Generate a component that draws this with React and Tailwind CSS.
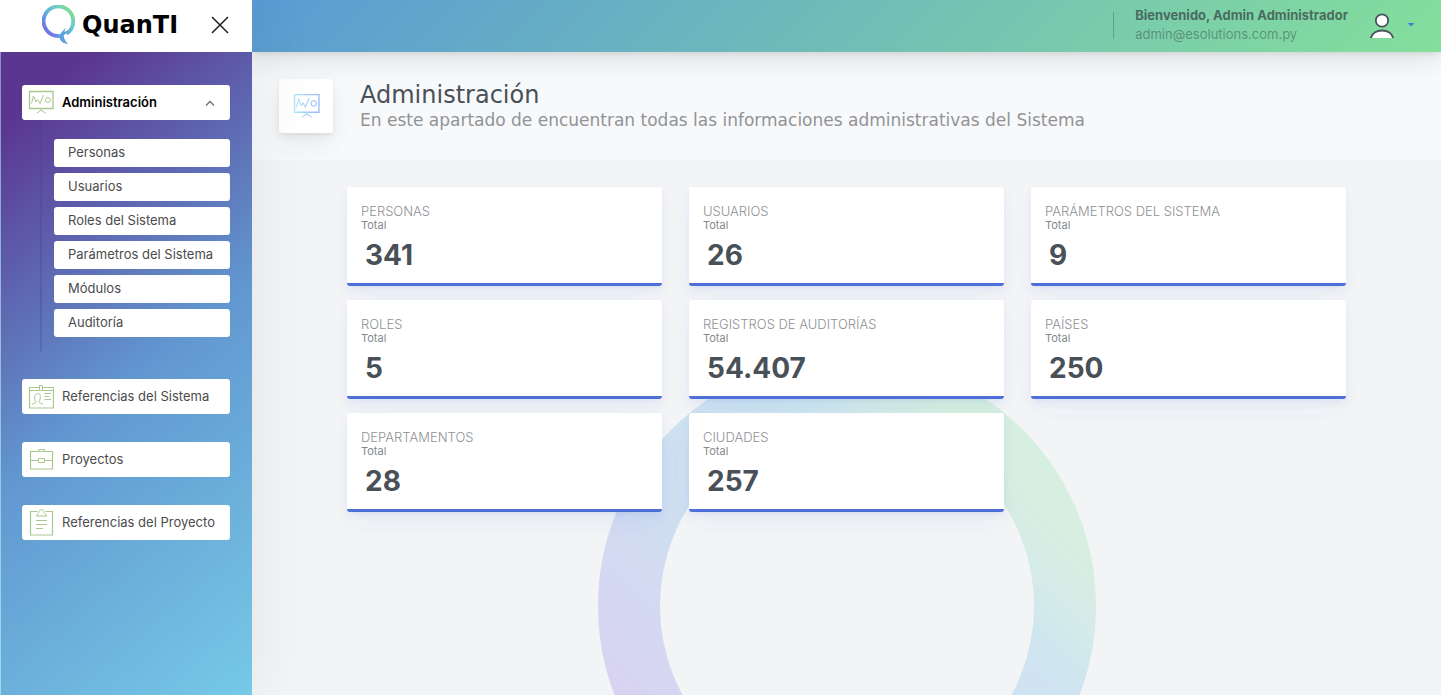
import React from "react";

const subItems = ["Personas", "Usuarios", "Roles del Sistema", "Parámetros del Sistema", "Módulos", "Auditoría"];

const cards = [
  ["PERSONAS", "341"],
  ["USUARIOS", "26"],
  ["PARÁMETROS DEL SISTEMA", "9"],
  ["ROLES", "5"],
  ["REGISTROS DE AUDITORÍAS", "54.407"],
  ["PAÍSES", "250"],
  ["DEPARTAMENTOS", "28"],
  ["CIUDADES", "257"],
];

function BoardIcon({ className, stroke = "#a9c78f" }) {
  return (
    <svg viewBox="0 0 26 26" className={className} fill="none" stroke={stroke} strokeWidth="1" aria-hidden="true">
      <defs>
        <linearGradient id="board" gradientUnits="userSpaceOnUse" x1="0" y1="0" x2="26" y2="0">
          <stop offset="0" stopColor="#b0e8fb" />
          <stop offset="1" stopColor="#98b8f8" />
        </linearGradient>
      </defs>
      <path strokeWidth="1.3" d="M1.5 1.5H25V18.5H1.5Z" />
      <path d="M3.5 13.5L5.5 6L8 12L9.6 9.5L12 13.5L15.5 5" />
      <circle cx="20" cy="10" r="2.5" />
      <path d="M13.2 18.5V20.5M13.2 20.2L8.7 23.2M13.2 20.2L17.7 23.2" />
    </svg>
  );
}

function BadgeIcon() {
  return (
    <svg viewBox="0 0 26 26" className="size-[26px]" fill="none" stroke="#a9c78f" strokeWidth="1" aria-hidden="true">
      <path strokeWidth="1.2" d="M11 3.5H1.5V24H25.5V3.5H15" />
      <path d="M1.5 6.5H11M15 6.5H25.5M11.5 1.5H14.5V6.5H11.5Z" />
      <path d="M4 20.5C5 19 8 19.5 8 17.5C6.5 16 6.5 14 7 11.5C7.5 9 12 9 12.2 11.5C12.5 14 12.2 16 11 17.5C11 19.5 14 19 15 20.5" />
      <path d="M16.5 9.5H23M16.5 12.5H21M16.5 15.5H23" />
    </svg>
  );
}

function BriefcaseIcon() {
  return (
    <svg viewBox="0 0 26 26" className="size-[26px]" fill="none" stroke="#a9c78f" strokeWidth="1" aria-hidden="true">
      <path strokeWidth="1.2" d="M2.5 4.5H24.5V22H2.5Z" />
      <path d="M10.5 4.5V2.5H16.5V4.5M2.5 13.5H10.5M16.5 13.5H24.5M10.5 11.5H16.5V15.5H10.5Z" />
    </svg>
  );
}

function ClipboardIcon() {
  return (
    <svg viewBox="0 0 26 30" className="h-[30px] w-[26px]" fill="none" stroke="#a9c78f" strokeWidth="1" aria-hidden="true">
      <path strokeWidth="1.2" d="M9.5 3.5H2.5V27H24.5V3.5H17.5" />
      <path d="M8.5 8H18.5C18 5.5 16 5.5 15.7 3.5C15.8 0.8 11.2 0.8 11.3 3.5C11 5.5 9 5.5 8.5 8Z" />
      <path d="M8 12.5H19M8 16.5H19M8 20.5H15" />
    </svg>
  );
}

function Logo() {
  return (
    <a href="#" className="flex items-center gap-[6px]">
      <svg viewBox="0 0 34 40" className="h-10 w-[34px]" fill="none" aria-hidden="true">
        <defs>
          <linearGradient id="logo" gradientUnits="userSpaceOnUse" x1="4" y1="29" x2="29" y2="5">
            <stop offset="0" stopColor="#7a68e0" />
            <stop offset="0.4" stopColor="#5fa8e2" />
            <stop offset="0.7" stopColor="#6cc8cf" />
            <stop offset="1" stopColor="#80e08f" />
          </linearGradient>
        </defs>
        <path stroke="url(#logo)" strokeWidth="3.8" d="M16.5 31A14.8 14.8 0 1 1 24.5 28.6" />
        <path fill="#5b9fdc" d="M15.5 29.5L18 29.3L23.6 22.8L22.4 27L27 25.5L21.6 30.6C22.2 34 23.6 37 26.2 39.2C21 38.6 18.2 36 17.6 32.8L15.5 32.8Z" />
      </svg>
      <span className="font-['DejaVu_Sans',sans-serif] text-2xl leading-7 font-bold text-black">QuanTI</span>
    </a>
  );
}

function MenuLink({ icon, children }) {
  return (
    <a href="#" className="flex h-[35px] items-center gap-[8px] rounded-[3px] bg-white pl-[6px] text-[13px] text-[#4b4b4b]">
      {icon}
      {children}
    </a>
  );
}

function Sidebar() {
  return (
    <aside className="z-10 flex w-[252px] shrink-0 flex-col shadow-[7px_0_60px_rgba(0,0,0,0.06)]">
      <div className="flex h-[52px] items-center justify-between bg-white pr-[22px] pb-[2px] pl-[42px]">
        <Logo />
        <button type="button" aria-label="Cerrar menú">
          <svg viewBox="0 0 20 20" className="size-5" fill="none" stroke="#222" strokeWidth="1.6" aria-hidden="true">
            <path d="M2 2L18 18M18 2L2 18" />
          </svg>
        </button>
      </div>
      <nav className="flex flex-1 flex-col gap-7 border-l border-white/30 bg-[linear-gradient(140deg,#5b3691_9%,#6197d0_51%,#76c9e7_100%)] py-[33px] pr-[22px] pl-[21px]">
        <div>
          <button
            type="button"
            aria-expanded="true"
            className="flex h-[35px] w-full items-center gap-[8px] rounded-[3px] bg-white pr-[14px] pl-[6px] text-[13px] font-semibold text-black"
          >
            <BoardIcon className="size-[26px]" />
            Administración
            <svg viewBox="0 0 12 12" className="ml-auto size-3" fill="none" stroke="#777" strokeWidth="1.5" aria-hidden="true">
              <path d="M2 8.5L6 4.5L10 8.5" />
            </svg>
          </button>
          <ul className="ml-[18px] flex flex-col gap-[6px] border-l-2 border-[#3c4696]/30 pt-[19px] pb-[14px] pl-3">
            {subItems.map((item) => (
              <li key={item}>
                <a href="#" className="flex h-7 items-center rounded-[3px] bg-white pl-[14px] text-[13px] text-[#4b4b4b]">
                  {item}
                </a>
              </li>
            ))}
          </ul>
        </div>
        <MenuLink icon={<BadgeIcon />}>Referencias del Sistema</MenuLink>
        <MenuLink icon={<BriefcaseIcon />}>Proyectos</MenuLink>
        <MenuLink icon={<ClipboardIcon />}>Referencias del Proyecto</MenuLink>
      </nav>
    </aside>
  );
}

function Header() {
  return (
    <header className="z-5 flex h-[52px] items-center justify-end bg-[linear-gradient(135deg,#5b9bd4,#84df9b)] pr-[26px] pb-[2px] shadow-[0_7px_35px_rgba(4,9,20,0.04),0_15px_22px_rgba(4,9,20,0.04),0_4px_8px_rgba(4,9,20,0.05),0_2px_3px_rgba(4,9,20,0.03)]">
      <div className="h-[27px] border-l border-[#343a40]/30" />
      <div className="pl-[21px] text-[13px] leading-[19px]">
        <div className="font-bold text-[#343a40]/70">Bienvenido, Admin Administrador</div>
        <div className="text-[#343a40]/45">admin@esolutions.com.py</div>
      </div>
      <button type="button" aria-label="Cuenta" className="ml-[21px] flex items-center gap-[12px]">
        <svg viewBox="0 0 26 28" className="h-7 w-[26px]" fill="#fff" stroke="#4a525a" strokeWidth="1.8" aria-hidden="true">
          <circle cx="13" cy="9.5" r="6.2" />
          <path stroke="none" d="M2 27C4 17 22 17 24 27Z" />
          <path fill="none" d="M1.8 27C4.5 17 21.5 17 24.2 27" />
        </svg>
        <svg viewBox="0 0 8 4" className="h-1 w-2" fill="#4a78d8" aria-hidden="true">
          <path d="M0.5 0H7.5L4 3.5Z" />
        </svg>
      </button>
    </header>
  );
}

function Watermark() {
  return (
    <svg viewBox="0 0 498 590" className="absolute top-[305px] left-1/2 h-[590px] w-[498px] -translate-x-1/2" fill="none" aria-hidden="true">
      <defs>
        <linearGradient id="ring" gradientUnits="userSpaceOnUse" x1="73" y1="425" x2="425" y2="73">
          <stop offset="0" stopColor="#dad0f2" />
          <stop offset="0.1" stopColor="#d7d5f2" />
          <stop offset="0.25" stopColor="#d3daf2" />
          <stop offset="0.4" stopColor="#cedff0" />
          <stop offset="0.72" stopColor="#cfe5f0" />
          <stop offset="0.81" stopColor="#d4ebe9" />
          <stop offset="0.92" stopColor="#d7efe0" />
        </linearGradient>
      </defs>
      <circle cx="249" cy="249" r="218" stroke="url(#ring)" strokeWidth="62" />
    </svg>
  );
}

function StatCard({ title, value }) {
  return (
    <article className="h-[99px] rounded-[3px] border-b-[3px] border-[#4f6fd8] bg-white px-[14px] pt-4 shadow-[0_7px_35px_rgba(63,106,216,0.02),0_15px_22px_rgba(63,106,216,0.02),0_4px_8px_rgba(63,106,216,0.05),0_2px_3px_rgba(63,106,216,0.03)]">
      <h2 className="text-[13px] leading-4 font-light text-[#8f9194]">{title}</h2>
      <p className="text-[11px] leading-[13px] text-[#85888c]">Total</p>
      <p className="mt-[5px] pl-1 text-[28px] leading-9 font-bold text-[#495057]">{value}</p>
    </article>
  );
}

export default function App() {
  return (
    <div className="flex h-screen overflow-hidden bg-[#f2f4f6] font-['Inter',sans-serif]">
      <Sidebar />
      <div className="flex min-w-0 flex-1 flex-col">
        <Header />
        <main className="relative flex-1 overflow-hidden">
          <Watermark />
          <div className="relative flex h-[108px] items-center bg-[#f8f9fb] pl-[27px]">
            <div className="flex size-[54px] items-center justify-center rounded-[3px] bg-white shadow-[0_7px_35px_rgba(4,9,20,0.03),0_15px_22px_rgba(4,9,20,0.03),0_4px_8px_rgba(4,9,20,0.05),0_2px_3px_rgba(4,9,20,0.03)]">
              <BoardIcon className="size-[27px]" stroke="url(#board)" />
            </div>
            <div className="pl-[27px] font-['DejaVu_Sans',sans-serif]">
              <h1 className="text-2xl leading-7 text-[#495057]">Administración</h1>
              <p className="text-[17px] leading-[22px] text-[#919396]">
                En este apartado de encuentran todas las informaciones administrativas del Sistema
              </p>
            </div>
          </div>
          <div className="relative grid grid-cols-3 gap-x-[27px] gap-y-[14px] px-[95px] pt-[27px]">
            {cards.map(([title, value]) => (
              <StatCard key={title} title={title} value={value} />
            ))}
          </div>
        </main>
      </div>
    </div>
  );
}
